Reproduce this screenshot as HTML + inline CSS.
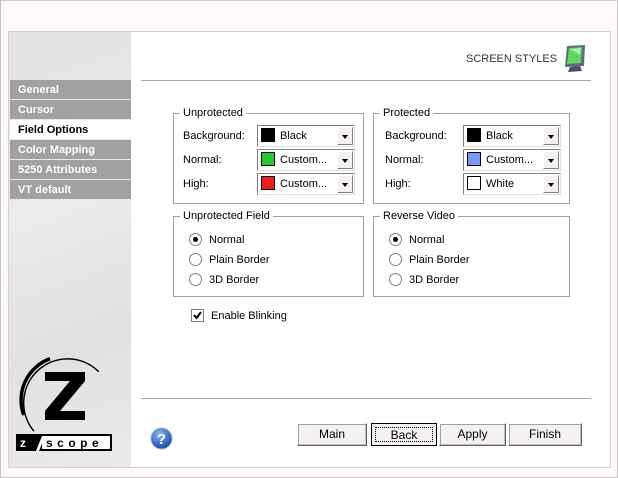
<!DOCTYPE html>
<html><head><meta charset="utf-8"><style>
*{margin:0;padding:0;box-sizing:border-box}
body{width:618px;height:478px;background:#fcf8fc;font-family:"Liberation Sans",sans-serif;font-size:11px;color:#000;position:relative;overflow:hidden}
.a{position:absolute}
.frame{left:0;top:0;width:618px;height:478px;border:1px solid #c8c4c8;border-top-color:#d0ccd0}
.panel{left:8px;top:31px;width:603px;height:437px;border:1px solid #d4d0d4;background:#fff}
.side{left:9px;top:32px;width:122px;height:435px;background:linear-gradient(160deg,#e4e2e4,#ecebec 40%,#e2e0e2 70%,#ebe9eb)}
.mi{position:absolute;left:10px;width:121px;height:19px;background:#a2a0a2;color:#fff;font-weight:bold;font-size:11px;line-height:20px;padding-left:8px}
.mi.sel{background:#fff;color:#000}
.rule{height:1px;background:#a8a8a8}
.gb{position:absolute;border:1px solid #a0a0a0}
.gb span{position:absolute;top:-8px;left:6px;background:#fff;padding:0 3px;line-height:14px}
.lbl{position:absolute;line-height:14px}
.cb{position:absolute;width:98px;height:22px;border:1px solid #808080;border-right-color:#e0e0e0;border-bottom-color:#e0e0e0;background:#fff}
.cb .sw{position:absolute;left:3px;top:2px;width:14px;height:14px;border:1px solid #000}
.cb .t{position:absolute;left:22px;top:3px;line-height:14px}
.cb .ar{position:absolute;right:1px;top:1px;width:16px;height:18px;background:#f4f0f4;border:1px solid #fff;border-right-color:#808080;border-bottom-color:#808080}
.cb .ar:after{content:"";position:absolute;left:4px;top:7px;border-left:3.5px solid transparent;border-right:3.5px solid transparent;border-top:4px solid #000}
.rd{position:absolute;width:13px;height:13px;border:1px solid #808080;border-radius:50%;background:#fff}
.rd.on:after{content:"";position:absolute;left:3px;top:3px;width:5px;height:5px;border-radius:50%;background:#000}
.btn{position:absolute;top:423px;height:23px;background:#f4f0f4;border:1px solid #fff;border-right-color:#606060;border-bottom-color:#606060;box-shadow:1px 1px 0 #a0a0a0 inset, -1px -1px 0 #c0c0c0 inset;text-align:center;line-height:20px;font-size:12px}
</style></head><body>
<div class="a frame"></div>
<div class="a panel"></div>
<div class="a side"></div>
<div class="mi" style="top:80px">General</div>
<div class="mi" style="top:100px">Cursor</div>
<div class="mi sel" style="top:120px">Field Options</div>
<div class="mi" style="top:140px">Color Mapping</div>
<div class="mi" style="top:160px">5250 Attributes</div>
<div class="mi" style="top:180px">VT default</div>

<div class="a" style="left:466px;top:53px;font-size:11px;color:#333">SCREEN STYLES</div>
<svg class="a" style="left:560px;top:43px" width="28" height="30" viewBox="0 0 28 30">
<path d="M7 3 L25 2 L24 23 L5 24 Z" fill="#5a6a80"/><path d="M9 5 L22 4 L21 20 L7 21 Z" fill="#5cd85c"/><path d="M10 6 L21 5 L20 12 Z" fill="#a8f0a8"/><path d="M10 24 L20 23 L22 28 L8 29 Z" fill="#4a5060"/></svg>
<div class="a rule" style="left:141px;top:80px;width:450px"></div>

<div class="gb" style="left:173px;top:113px;width:191px;height:91px"><span>Unprotected</span></div>
<div class="lbl" style="left:183px;top:129px">Background:</div>
<div class="lbl" style="left:183px;top:153px">Normal:</div>
<div class="lbl" style="left:183px;top:177px">High:</div>
<div class="cb" style="left:257px;top:125px"><div class="sw" style="background:#000"></div><div class="t">Black</div><div class="ar"></div></div>
<div class="cb" style="left:257px;top:149px"><div class="sw" style="background:#22cc33"></div><div class="t">Custom...</div><div class="ar"></div></div>
<div class="cb" style="left:257px;top:173px"><div class="sw" style="background:#ee1c1c"></div><div class="t">Custom...</div><div class="ar"></div></div>

<div class="gb" style="left:373px;top:113px;width:197px;height:91px"><span>Protected</span></div>
<div class="lbl" style="left:385px;top:129px">Background:</div>
<div class="lbl" style="left:385px;top:153px">Normal:</div>
<div class="lbl" style="left:385px;top:177px">High:</div>
<div class="cb" style="left:463px;top:125px"><div class="sw" style="background:#000"></div><div class="t">Black</div><div class="ar"></div></div>
<div class="cb" style="left:463px;top:149px"><div class="sw" style="background:#7a98f4"></div><div class="t">Custom...</div><div class="ar"></div></div>
<div class="cb" style="left:463px;top:173px"><div class="sw" style="background:#fff"></div><div class="t">White</div><div class="ar"></div></div>

<div class="gb" style="left:173px;top:216px;width:191px;height:81px"><span>Unprotected Field</span></div>
<div class="rd on" style="left:189px;top:233px"></div><div class="lbl" style="left:209px;top:233px">Normal</div>
<div class="rd" style="left:189px;top:253px"></div><div class="lbl" style="left:209px;top:253px">Plain Border</div>
<div class="rd" style="left:189px;top:273px"></div><div class="lbl" style="left:209px;top:273px">3D Border</div>

<div class="gb" style="left:373px;top:216px;width:197px;height:81px"><span>Reverse Video</span></div>
<div class="rd on" style="left:389px;top:233px"></div><div class="lbl" style="left:409px;top:233px">Normal</div>
<div class="rd" style="left:389px;top:253px"></div><div class="lbl" style="left:409px;top:253px">Plain Border</div>
<div class="rd" style="left:389px;top:273px"></div><div class="lbl" style="left:409px;top:273px">3D Border</div>

<div class="a" style="left:191px;top:309px;width:13px;height:13px;border:1px solid #808080;background:#fff"></div>
<svg class="a" style="left:193px;top:311px" width="9" height="9"><path d="M1 4 L3.5 7 L8 1" stroke="#000" stroke-width="2" fill="none"/></svg>
<div class="lbl" style="left:211px;top:309px">Enable Blinking</div>

<div class="a rule" style="left:141px;top:398px;width:450px"></div>

<svg class="a" style="left:150px;top:427px" width="23" height="23"><defs><radialGradient id="g" cx="40%" cy="30%" r="70%"><stop offset="0" stop-color="#8ab8f8"/><stop offset="1" stop-color="#1848b0"/></radialGradient></defs><circle cx="11.5" cy="11.5" r="10.5" fill="url(#g)" stroke="#9ab0d0"/><text x="11.5" y="17" font-family="Liberation Sans" font-weight="bold" font-size="15" fill="#fff" text-anchor="middle">?</text></svg>

<div class="btn" style="left:297px;width:70px">Main</div>
<div class="btn" style="left:371px;width:66px;border:1px solid #000;box-shadow:none"><div style="position:absolute;left:3px;top:3px;right:3px;bottom:3px;border:1px dotted #000;line-height:14px">Back</div></div>
<div class="btn" style="left:439px;width:67px">Apply</div>
<div class="btn" style="left:508px;width:74px">Finish</div>

<svg class="a" style="left:9px;top:340px" width="122" height="120">
<path d="M89.7 31.7 A44 44 0 0 0 24.9 91.1" stroke="#000" stroke-width="1.5" fill="none"/>
<path d="M41 18.7 A44 44 0 0 0 14.7 75" stroke="#000" stroke-width="3.5" fill="none"/>
<path d="M36 32 L76 32 L76 41 L51 71 L76 71 L76 80 L36 80 L36 71 L61 41 L36 41 Z" fill="#000"/>
<rect x="7" y="94" width="96" height="17" fill="#000"/>
<text x="11" y="107" fill="#fff" font-family="Liberation Sans" font-weight="bold" font-size="12">z</text>
<path d="M27 111 L33 96 L36 96 L30 111 Z" fill="#fff"/>
<rect x="33" y="96" width="68" height="13" fill="#fff"/>
<text x="37" y="107" fill="#000" font-family="Liberation Sans" font-weight="bold" font-size="12" letter-spacing="4.5">scope</text>
</svg>
</body></html>
